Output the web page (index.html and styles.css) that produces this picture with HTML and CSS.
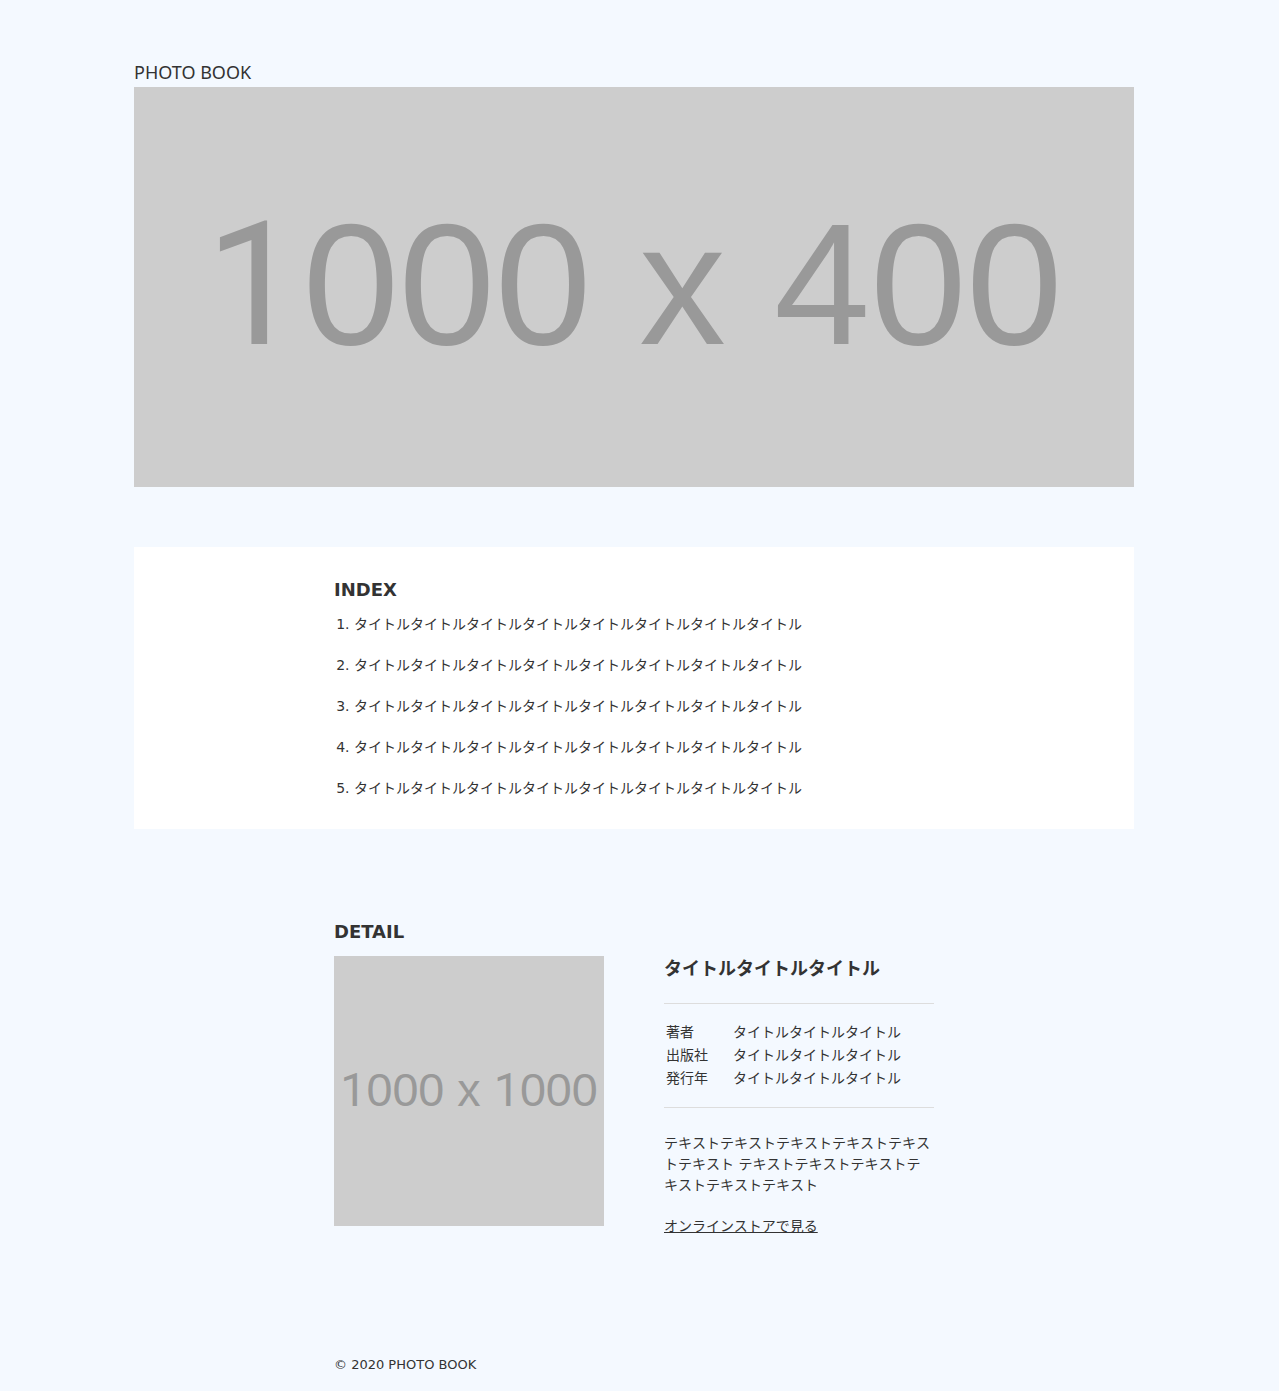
FILE: index.html
```html
<!DOCTYPE html>
<html lang="ja">
<head>
<meta charset="utf-8">
<meta name="viewport" content="width=device-width, initial-scale=1">
<title>PHOTO BOOK</title>
<link rel="stylesheet" href="styles.css">
</head>
<body>
<div class="page">
  <header class="header">
    <h1 class="site-title">PHOTO BOOK</h1>
    <svg class="picture" viewBox="0 0 1000 400" role="img" aria-label="1000 x 400">
      <rect class="picture-bg" width="1000" height="400"/>
      <text class="picture-label" x="500" y="257"><tspan class="plain-one">1</tspan>000 x 400</text>
    </svg>
  </header>
  <main>
    <section class="index">
      <div class="inner">
        <h2 class="section-title">INDEX</h2>
        <ol class="index-list">
          <li>タイトルタイトルタイトルタイトルタイトルタイトルタイトルタイトル</li>
          <li>タイトルタイトルタイトルタイトルタイトルタイトルタイトルタイトル</li>
          <li>タイトルタイトルタイトルタイトルタイトルタイトルタイトルタイトル</li>
          <li>タイトルタイトルタイトルタイトルタイトルタイトルタイトルタイトル</li>
          <li>タイトルタイトルタイトルタイトルタイトルタイトルタイトルタイトル</li>
        </ol>
      </div>
    </section>
    <section class="detail inner">
      <h2 class="section-title">DETAIL</h2>
      <div class="detail-columns">
        <svg class="picture" viewBox="0 0 1000 1000" role="img" aria-label="1000 x 1000">
          <rect class="picture-bg" width="1000" height="1000"/>
          <text class="picture-label" x="500" y="557"><tspan class="plain-one">1</tspan>000 x <tspan class="plain-one">1</tspan>000</text>
        </svg>
        <div class="detail-body">
          <h3 class="book-title">タイトルタイトルタイトル</h3>
          <div class="book-data">
            <table class="book-table">
              <tr><th scope="row">著者</th><td>タイトルタイトルタイトル</td></tr>
              <tr><th scope="row">出版社</th><td>タイトルタイトルタイトル</td></tr>
              <tr><th scope="row">発行年</th><td>タイトルタイトルタイトル</td></tr>
            </table>
          </div>
          <p class="book-text">テキストテキストテキストテキストテキストテキスト テキストテキストテキストテキストテキストテキスト</p>
          <a class="store-link" href="#">オンラインストアで見る</a>
        </div>
      </div>
    </section>
  </main>
  <footer class="footer inner"><small class="copyright">© 2020 PHOTO BOOK</small></footer>
</div>
</body>
</html>
```
FILE: styles.css
```css
* {
  box-sizing: border-box;
}

body {
  margin: 0;
  padding: 60px 11px 16px 0;
  background: #f4f9ff;
  color: #333;
  font: 14px/21px "DejaVu Sans", "Noto Sans CJK JP", sans-serif;
}

h1, h2, h3, p, ol {
  margin: 0;
}

.page {
  max-width: 1000px;
  margin: 0 auto;
}

.inner {
  max-width: 600px;
  margin: 0 auto;
}

.site-title {
  padding-bottom: 2px;
  font: 18px/25px "Noto Sans", sans-serif;
}

.picture {
  display: block;
  width: 100%;
}

.picture-bg {
  fill: #cdcdcd;
}

.picture-label {
  fill: #999;
  font: 173px "Liberation Sans", sans-serif;
  text-anchor: middle;
}

.plain-one {
  font-family: Roboto, sans-serif;
}

.index {
  margin-top: 60px;
  padding: 30px 0;
  background: #fff;
}

.section-title {
  padding-bottom: 12px;
  font-size: 18px;
  line-height: 25px;
}

.index-list {
  display: grid;
  gap: 20px;
  padding-left: 20px;
}

.detail {
  margin-top: 90px;
}

.detail-columns {
  display: grid;
  grid-template-columns: 1fr 1fr;
  align-items: start;
  gap: 60px;
}

.book-title {
  font-size: 18px;
  line-height: 25px;
}

.book-data {
  margin: 22px 0 25px;
  padding: 16px 0;
  border: solid #ddd;
  border-width: 1px 0;
}

.book-table {
  width: 100%;
  border-spacing: 2px;
}

.book-table th,
.book-table td {
  padding: 0;
  font-weight: 400;
  text-align: left;
}

.book-table th {
  width: 65px;
}

.book-text {
  margin-bottom: 20px;
  padding-right: 2px;
  font-kerning: none;
}

.store-link {
  color: inherit;
}

.footer {
  margin-top: 119px;
}

.copyright {
  display: block;
  font-size: 13px;
  line-height: 18px;
}
```
